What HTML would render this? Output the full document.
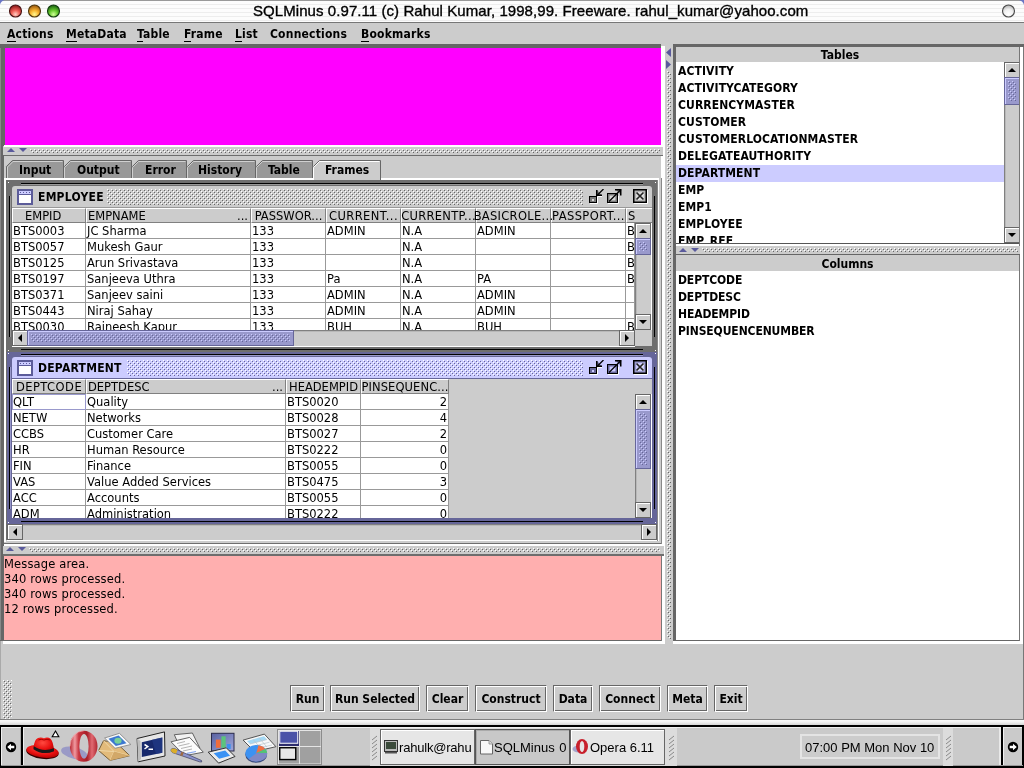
<!DOCTYPE html>
<html lang="en"><head><meta charset="utf-8"><title>SQLMinus 0.97.11</title>
<style>
html,body{margin:0;padding:0}
body{width:1024px;height:768px;overflow:hidden;position:relative;background:#ccc;font-family:"DejaVu Sans","Liberation Sans",sans-serif;color:#000}
div,.a,.t{position:absolute}
.t{white-space:nowrap;display:block}
.r,.b,.m{margin-top:1px}
.r{font:400 11.5px/16px "DejaVu Sans","Liberation Sans",sans-serif}
.b{font:700 12px/16px "DejaVu Sans Condensed","DejaVu Sans","Liberation Sans",sans-serif}
.m{font:400 11.5px/15px "DejaVu Sans","Liberation Sans",sans-serif;letter-spacing:.15px}
.h{font:400 13px/16px "Liberation Sans",sans-serif}
.ttl{font:400 15px/20px "Liberation Sans",sans-serif;letter-spacing:.07px;-webkit-text-stroke:.35px #000}
u{text-decoration:none;border-bottom:1px solid #000;padding-bottom:0}
.cell{overflow:hidden}
</style></head><body><div id="root" style="left:0;top:0;width:1024px;height:768px;will-change:transform">
<svg width="0" height="0" style="position:absolute"><defs>
<pattern id="b1" width="4" height="4" patternUnits="userSpaceOnUse"><rect width="4" height="4" fill="#ccc"/><rect x="0" y="0" width="1" height="1" fill="#fff"/><rect x="1" y="1" width="1" height="1" fill="#666"/><rect x="2" y="2" width="1" height="1" fill="#fff"/><rect x="3" y="3" width="1" height="1" fill="#666"/></pattern>
<pattern id="b2" width="4" height="4" patternUnits="userSpaceOnUse"><rect width="4" height="4" fill="#9999cc"/><rect x="0" y="0" width="1" height="1" fill="#ccccff"/><rect x="1" y="1" width="1" height="1" fill="#666699"/><rect x="2" y="2" width="1" height="1" fill="#ccccff"/><rect x="3" y="3" width="1" height="1" fill="#666699"/></pattern>
<pattern id="b3" width="4" height="4" patternUnits="userSpaceOnUse"><rect width="4" height="4" fill="#ccccff"/><rect x="0" y="0" width="1" height="1" fill="#fff"/><rect x="1" y="1" width="1" height="1" fill="#666699"/><rect x="2" y="2" width="1" height="1" fill="#fff"/><rect x="3" y="3" width="1" height="1" fill="#666699"/></pattern>
<radialGradient id="gr" cx=".5" cy=".78" r=".75"><stop offset="0" stop-color="#ffd0c4"/><stop offset=".45" stop-color="#f06058"/><stop offset="1" stop-color="#8a1818"/></radialGradient>
<radialGradient id="gy" cx=".5" cy=".78" r=".75"><stop offset="0" stop-color="#fff890"/><stop offset=".45" stop-color="#f8b430"/><stop offset="1" stop-color="#9a5810"/></radialGradient>
<radialGradient id="gg" cx=".5" cy=".78" r=".75"><stop offset="0" stop-color="#d0ff98"/><stop offset=".45" stop-color="#68cc30"/><stop offset="1" stop-color="#1a6410"/></radialGradient>
<radialGradient id="gw" cx=".5" cy=".75" r=".75"><stop offset="0" stop-color="#fff"/><stop offset=".5" stop-color="#f0f0f0"/><stop offset="1" stop-color="#b0b0b0"/></radialGradient>
</defs></svg>

<div style="left:0px;top:0px;width:1024px;height:23px;background:repeating-linear-gradient(to bottom,#fcfcfc 0,#fcfcfc 2.5px,#ededed 2.9px,#ededed 3.7px,#fcfcfc 4px);border-bottom:1px solid #777;box-sizing:border-box;border-top:1px solid #999;"></div>
<svg class="a" style="left:0;top:0" width="1024" height="8"><path d="M0,0 H4.500 Q1,1 0,4.500 Z" fill="#6a76c4"/><path d="M1024,0 H1019 Q1023,1 1024,5 Z" fill="#6a76c4"/></svg>
<svg class="a" style="left:0;top:0" width="1024" height="23"><circle cx="15.5" cy="11" r="6" fill="url(#gr)" stroke="#481414" stroke-width="1.100"/><circle cx="34.5" cy="11" r="6" fill="url(#gy)" stroke="#50380c" stroke-width="1.100"/><circle cx="53.5" cy="11" r="6" fill="url(#gg)" stroke="#123c10" stroke-width="1.100"/><circle cx="1008.5" cy="11" r="6" fill="url(#gw)" stroke="#4a4a4a" stroke-width="1.100"/></svg>
<span class="t ttl" style="left:253px;top:1px;">SQLMinus 0.97.11 (c) Rahul Kumar, 1998,99. Freeware. rahul_kumar@yahoo.com</span>
<div style="left:0px;top:23px;width:1024px;height:21px;background:#ccc;"></div>
<span class="t b" style="left:7px;top:25px;letter-spacing:.2px;"><u>A</u>ctions</span>
<span class="t b" style="left:66px;top:25px;letter-spacing:.2px;"><u>M</u>etaData</span>
<span class="t b" style="left:137px;top:25px;letter-spacing:.2px;"><u>T</u>able</span>
<span class="t b" style="left:184px;top:25px;letter-spacing:.2px;"><u>F</u>rame</span>
<span class="t b" style="left:235px;top:25px;letter-spacing:.2px;"><u>L</u>ist</span>
<span class="t b" style="left:270px;top:25px;letter-spacing:.2px;">Connections</span>
<span class="t b" style="left:361px;top:25px;letter-spacing:.2px;"><u>B</u>ookmarks</span>
<div style="left:0px;top:44px;width:4px;height:597px;background:#666;"></div>
<div style="left:0px;top:44px;width:1px;height:597px;background:#888;"></div>
<div style="left:1023px;top:44px;width:1px;height:680px;background:#777;"></div>
<div style="left:0px;top:641px;width:1px;height:80px;background:#aaa;"></div>
<div style="left:0px;top:44px;width:661px;height:4px;background:#666;"></div>
<div style="left:4px;top:48px;width:1px;height:97px;background:#666;"></div>
<div style="left:5px;top:48px;width:656px;height:97px;background:#f0f;"></div>
<div style="left:661px;top:46px;width:4px;height:595px;background:#fff;"></div>
<div style="left:665px;top:44px;width:8px;height:597px;background:#ccc;"></div>
<svg class="a" style="left:667px;top:71px" width="4" height="568"><rect width="4" height="568" fill="url(#b1)"/></svg>
<svg class="a" style="left:666px;top:48px" width="5" height="9"><polygon points="5,0 0,4.5 5,9" fill="#5a5a9c"/></svg>
<svg class="a" style="left:666px;top:60px" width="5" height="9"><polygon points="0,0 5,4.5 0,9" fill="#5a5a9c"/></svg>
<div style="left:661px;top:44px;width:12px;height:2px;background:#ccc;"></div>
<div style="left:3px;top:146px;width:660px;height:9px;background:#ccc;"></div>
<div style="left:4px;top:145px;width:659px;height:2px;background:#fff;"></div>
<svg class="a" style="left:7px;top:148px" width="8" height="4"><polygon points="0,4 4.0,0 8,4" fill="#5a5a9c"/></svg>
<svg class="a" style="left:19px;top:148px" width="8" height="4"><polygon points="0,0 8,0 4.0,4" fill="#5a5a9c"/></svg>
<svg class="a" style="left:30px;top:149px" width="630" height="4"><rect width="630" height="4" fill="url(#b1)"/></svg>
<div style="left:4px;top:155px;width:659px;height:1px;background:#6e6e6e;"></div>
<div style="left:4px;top:156px;width:657px;height:388px;background:#ccc;"></div>
<svg class="a" style="left:0;top:158px" width="400" height="24"><polygon points="6,20 6,8.5 12,2.5 64,2.5 64,20" fill="#999"/><polyline points="6.5,20 6.5,8.5 12.5,2.5 63.5,2.5 63.5,20" fill="none" stroke="#666" stroke-width="1"/><polyline points="7.5,20 7.5,9 13,3.5 62.5,3.5" fill="none" stroke="#d0d0d0" stroke-width="1"/><polygon points="64,20 64,8.5 70,2.5 132,2.5 132,20" fill="#999"/><polyline points="64.5,8.5 70.5,2.5 131.5,2.5 131.5,20" fill="none" stroke="#666" stroke-width="1"/><polyline points="64.5,20 64.5,9.5 70.5,3.5 130.5,3.5" fill="none" stroke="#d0d0d0" stroke-width="1"/><polygon points="132,20 132,8.5 138,2.5 187,2.5 187,20" fill="#999"/><polyline points="132.5,8.5 138.5,2.5 186.5,2.5 186.5,20" fill="none" stroke="#666" stroke-width="1"/><polyline points="132.5,20 132.5,9.5 138.5,3.5 185.5,3.5" fill="none" stroke="#d0d0d0" stroke-width="1"/><polygon points="187,20 187,8.5 193,2.5 256,2.5 256,20" fill="#999"/><polyline points="187.5,8.5 193.5,2.5 255.5,2.5 255.5,20" fill="none" stroke="#666" stroke-width="1"/><polyline points="187.5,20 187.5,9.5 193.5,3.5 254.5,3.5" fill="none" stroke="#d0d0d0" stroke-width="1"/><polygon points="256,20 256,8.5 262,2.5 313,2.5 313,20" fill="#999"/><polyline points="256.5,8.5 262.5,2.5 312.5,2.5 312.5,20" fill="none" stroke="#666" stroke-width="1"/><polyline points="256.5,20 256.5,9.5 262.5,3.5 311.5,3.5" fill="none" stroke="#d0d0d0" stroke-width="1"/><polygon points="313,22 313,8.5 319,2.5 381,2.5 381,22" fill="#ccc"/><polyline points="313.5,8.5 319.5,2.5 380.5,2.5 380.5,22" fill="none" stroke="#666" stroke-width="1"/><polyline points="313.5,22 313.5,9.5 319.5,3.5 379.5,3.5" fill="none" stroke="#fff" stroke-width="1"/></svg>
<span class="t b" style="left:19px;top:161px;">Input</span>
<span class="t b" style="left:77px;top:161px;">Output</span>
<span class="t b" style="left:145px;top:161px;">Error</span>
<span class="t b" style="left:198px;top:161px;">History</span>
<span class="t b" style="left:268px;top:161px;">Table</span>
<span class="t b" style="left:325px;top:161px;">Frames</span>
<div style="left:4px;top:178px;width:309px;height:2px;background:#fff;"></div>
<div style="left:381px;top:178px;width:278px;height:2px;background:#fff;"></div>
<div style="left:4px;top:178px;width:2px;height:364px;background:#fff;"></div>
<div style="left:6px;top:180px;width:1px;height:360px;background:#6e6e6e;"></div>
<div style="left:6px;top:180px;width:651px;height:1px;background:#6e6e6e;"></div>
<div style="left:4px;top:543px;width:658px;height:1px;background:#6e6e6e;"></div>
<div style="left:657px;top:180px;width:1px;height:361px;background:#888;"></div>
<div style="left:658px;top:179px;width:1px;height:362px;background:#fff;"></div>
<div style="left:661px;top:178px;width:1px;height:366px;background:#888;"></div>
<div style="left:6px;top:541px;width:655px;height:2px;background:#ccc;"></div>
<div style="left:7px;top:181px;width:650px;height:171px;background:#6e6e6e;"></div>
<div style="left:21px;top:183px;width:622px;height:1px;background:#000;"></div>
<div style="left:21px;top:184px;width:622px;height:1px;background:#999;"></div>
<div style="left:21px;top:349px;width:622px;height:1px;background:#000;"></div>
<div style="left:9px;top:196px;width:1px;height:141px;background:#000;"></div>
<div style="left:10px;top:196px;width:1px;height:141px;background:#999;"></div>
<div style="left:654px;top:196px;width:1px;height:141px;background:#000;"></div>
<div style="left:8px;top:182px;width:1px;height:1px;background:#fff;"></div>
<div style="left:655px;top:182px;width:1px;height:1px;background:#fff;"></div>
<div style="left:8px;top:350px;width:1px;height:1px;background:#fff;"></div>
<div style="left:655px;top:350px;width:1px;height:1px;background:#fff;"></div>
<div style="left:12px;top:186px;width:640px;height:22px;background:#ccc;border-radius:3px 3px 0 0;"></div>
<div style="left:12px;top:207px;width:640px;height:1px;background:#999;"></div>
<svg class="a" style="left:17px;top:189px" width="16" height="16"><rect x="1" y="1" width="14" height="14" fill="#fff" stroke="#5c5c99" stroke-width="2"/><rect x="2" y="2" width="12" height="3" fill="#ccccff"/><rect x="2" y="5" width="12" height="1" fill="#5c5c99"/><rect x="3" y="3" width="1" height="1" fill="#5c5c99"/><rect x="6" y="3" width="1" height="1" fill="#5c5c99"/><rect x="9" y="3" width="1" height="1" fill="#5c5c99"/><rect x="12" y="3" width="1" height="1" fill="#5c5c99"/></svg>
<span class="t b" style="left:38px;top:188px;letter-spacing:.25px;">EMPLOYEE</span>
<svg class="a" style="left:107px;top:189px" width="476" height="16"><rect width="476" height="16" fill="url(#b1)"/></svg>
<svg class="a" style="left:589px;top:189px" width="60" height="16"><rect x=".5" y="7.500" width="7" height="6" fill="#7a7a7a" stroke="#000" stroke-width="1"/><rect x="3" y="10" width="2" height="2" fill="#d8d8d8"/><path d="M1,14.500 H8.500 V8" stroke="#fff" stroke-width="1" fill="none"/><path d="M8,1 V6.500 H13 Z" fill="#7a7a7a"/><path d="M14.500,0 L8.500,6" stroke="#000" stroke-width="1.300" fill="none"/><path d="M7.750,1 V6.250 H13" stroke="#000" stroke-width="1.500" fill="none"/><path d="M8.500,7.500 H13" stroke="#fff" stroke-width="1" fill="none"/><rect x="18.500" y="4.500" width="10" height="9" fill="#7a7a7a" stroke="#000" stroke-width="1"/><rect x="20.500" y="6.500" width="6" height="5" fill="#d8d8d8"/><path d="M20,12.500 L27,5.500" stroke="#000" stroke-width="1.300" fill="none"/><path d="M19,14.500 H29.500 V7" stroke="#fff" stroke-width="1" fill="none"/><path d="M27,1 H31.500 V5.500 Z" fill="#7a7a7a"/><path d="M26.500,6 L32,.5" stroke="#000" stroke-width="1.300" fill="none"/><path d="M26,.75 H31.750 V6.500" stroke="#000" stroke-width="1.500" fill="none"/><rect x="44.750" y=".75" width="12.500" height="12.500" fill="#b4b4b4" stroke="#000" stroke-width="1.500"/><rect x="47" y="3" width="8" height="8" fill="#d8d8d8"/><path d="M45,14.500 H58.500 V1" stroke="#fff" stroke-width="1" fill="none"/><path d="M48.500,4 L55,10.500 M55,4 L48.500,10.500" stroke="#fff" stroke-width="1.200" fill="none"/><path d="M47.500,3.500 L54.500,10.500 M54.500,3.500 L47.500,10.500" stroke="#222" stroke-width="1.700" fill="none"/></svg>
<div style="left:12px;top:208px;width:640px;height:138px;background:#ccc;"></div>
<div class="cell" style="left:12px;top:208px;width:74px;height:15px;background:#ccc;box-sizing:border-box;border:1px solid #fff;border-right-color:#808080;border-bottom-color:#808080;"></div>
<div class="cell" style="left:86px;top:208px;width:165px;height:15px;background:#ccc;box-sizing:border-box;border:1px solid #fff;border-right-color:#808080;border-bottom-color:#808080;"></div>
<div class="cell" style="left:251px;top:208px;width:75px;height:15px;background:#ccc;box-sizing:border-box;border:1px solid #fff;border-right-color:#808080;border-bottom-color:#808080;"></div>
<div class="cell" style="left:326px;top:208px;width:75px;height:15px;background:#ccc;box-sizing:border-box;border:1px solid #fff;border-right-color:#808080;border-bottom-color:#808080;"></div>
<div class="cell" style="left:401px;top:208px;width:75px;height:15px;background:#ccc;box-sizing:border-box;border:1px solid #fff;border-right-color:#808080;border-bottom-color:#808080;"></div>
<div class="cell" style="left:476px;top:208px;width:75px;height:15px;background:#ccc;box-sizing:border-box;border:1px solid #fff;border-right-color:#808080;border-bottom-color:#808080;"></div>
<div class="cell" style="left:551px;top:208px;width:75px;height:15px;background:#ccc;box-sizing:border-box;border:1px solid #fff;border-right-color:#808080;border-bottom-color:#808080;"></div>
<div class="cell" style="left:626px;top:208px;width:26px;height:15px;background:#ccc;box-sizing:border-box;border:1px solid #fff;border-right:0;border-bottom-color:#808080;"></div>
<span class="t r" style="left:25px;top:207px;">EMPID</span>
<span class="t r" style="left:88px;top:207px;">EMPNAME</span>
<span class="t r" style="left:86px;top:207px;width:162px;text-align:right;">...</span>
<span class="t r" style="left:252px;top:207px;letter-spacing:0px;width:73px;display:flex;justify-content:center;">PASSWOR...</span>
<span class="t r" style="left:327px;top:207px;letter-spacing:0.4px;width:73px;display:flex;justify-content:center;">CURRENT...</span>
<span class="t r" style="left:402px;top:207px;letter-spacing:0.3px;width:73px;display:flex;justify-content:center;">CURRENTP...</span>
<span class="t r" style="left:477px;top:207px;letter-spacing:0.3px;width:73px;display:flex;justify-content:center;">BASICROLE...</span>
<span class="t r" style="left:552px;top:207px;letter-spacing:0.4px;width:73px;display:flex;justify-content:center;">PASSPORT...</span>
<span class="t r" style="left:628px;top:207px;width:7px;overflow:hidden;letter-spacing:-1px;">SI</span>
<div style="left:12px;top:223px;width:623px;height:107px;overflow:hidden;"><div style="left:0;top:0;width:623px;height:112px;background:#fff"></div><div style="left:0;top:15px;width:623px;height:1px;background:#999"></div><div style="left:0;top:31px;width:623px;height:1px;background:#999"></div><div style="left:0;top:47px;width:623px;height:1px;background:#999"></div><div style="left:0;top:63px;width:623px;height:1px;background:#999"></div><div style="left:0;top:79px;width:623px;height:1px;background:#999"></div><div style="left:0;top:95px;width:623px;height:1px;background:#999"></div><div style="left:0;top:111px;width:623px;height:1px;background:#999"></div><div style="left:73px;top:0;width:1px;height:112px;background:#999"></div><div style="left:238px;top:0;width:1px;height:112px;background:#999"></div><div style="left:313px;top:0;width:1px;height:112px;background:#999"></div><div style="left:388px;top:0;width:1px;height:112px;background:#999"></div><div style="left:463px;top:0;width:1px;height:112px;background:#999"></div><div style="left:538px;top:0;width:1px;height:112px;background:#999"></div><div style="left:613px;top:0;width:1px;height:112px;background:#999"></div><div style="left:622px;top:0;width:1px;height:112px;background:#999"></div><span class="t r" style="left:1px;top:-1px">BTS0003</span><span class="t r" style="left:75px;top:-1px">JC Sharma</span><span class="t r" style="left:240px;top:-1px">133</span><span class="t r" style="left:315px;top:-1px">ADMIN</span><span class="t r" style="left:390px;top:-1px">N.A</span><span class="t r" style="left:465px;top:-1px">ADMIN</span><span class="t r" style="left:615px;top:-1px">B</span><span class="t r" style="left:1px;top:15px">BTS0057</span><span class="t r" style="left:75px;top:15px">Mukesh Gaur</span><span class="t r" style="left:240px;top:15px">133</span><span class="t r" style="left:390px;top:15px">N.A</span><span class="t r" style="left:615px;top:15px">B</span><span class="t r" style="left:1px;top:31px">BTS0125</span><span class="t r" style="left:75px;top:31px">Arun Srivastava</span><span class="t r" style="left:240px;top:31px">133</span><span class="t r" style="left:390px;top:31px">N.A</span><span class="t r" style="left:615px;top:31px">B</span><span class="t r" style="left:1px;top:47px">BTS0197</span><span class="t r" style="left:75px;top:47px">Sanjeeva Uthra</span><span class="t r" style="left:240px;top:47px">133</span><span class="t r" style="left:315px;top:47px">Pa</span><span class="t r" style="left:390px;top:47px">N.A</span><span class="t r" style="left:465px;top:47px">PA</span><span class="t r" style="left:615px;top:47px">B</span><span class="t r" style="left:1px;top:63px">BTS0371</span><span class="t r" style="left:75px;top:63px">Sanjeev saini</span><span class="t r" style="left:240px;top:63px">133</span><span class="t r" style="left:315px;top:63px">ADMIN</span><span class="t r" style="left:390px;top:63px">N.A</span><span class="t r" style="left:465px;top:63px">ADMIN</span><span class="t r" style="left:1px;top:79px">BTS0443</span><span class="t r" style="left:75px;top:79px">Niraj Sahay</span><span class="t r" style="left:240px;top:79px">133</span><span class="t r" style="left:315px;top:79px">ADMIN</span><span class="t r" style="left:390px;top:79px">N.A</span><span class="t r" style="left:465px;top:79px">ADMIN</span><span class="t r" style="left:1px;top:95px">BTS0030</span><span class="t r" style="left:75px;top:95px">Rajneesh Kapur</span><span class="t r" style="left:240px;top:95px">133</span><span class="t r" style="left:315px;top:95px">BUH</span><span class="t r" style="left:390px;top:95px">N.A</span><span class="t r" style="left:465px;top:95px">BUH</span><span class="t r" style="left:615px;top:95px">B</span></div>
<div style="left:635px;top:223px;width:17px;height:107px;background:#ccc;box-sizing:border-box;border:1px solid #808080;border-right-color:#fff;border-bottom-color:#fff;box-shadow:inset 1px 1px 0 #b8b8b8;"></div>
<div style="left:635px;top:223px;width:16px;height:16px;background:#ccc;box-sizing:border-box;border:1px solid #666;box-shadow:inset 1px 1px 0 #fff;"></div>
<svg class="a" style="left:639px;top:229px" width="8" height="4"><polygon points="0,4 4.0,0 8,4" fill="#000"/></svg>
<div style="left:635px;top:238px;width:16px;height:17px;background:#9999cc;box-sizing:border-box;border:1px solid #666699;box-shadow:inset 1px 1px 0 #ccccff;"></div>
<svg class="a" style="left:639px;top:242px" width="8" height="9"><rect width="8" height="9" fill="url(#b2)"/></svg>
<div style="left:635px;top:314px;width:16px;height:16px;background:#ccc;box-sizing:border-box;border:1px solid #666;box-shadow:inset 1px 1px 0 #fff;"></div>
<svg class="a" style="left:639px;top:320px" width="8" height="4"><polygon points="0,0 8,0 4.0,4" fill="#000"/></svg>
<div style="left:651px;top:223px;width:1px;height:107px;background:#fff;"></div>
<div style="left:12px;top:330px;width:623px;height:17px;background:#ccc;box-sizing:border-box;border:1px solid #808080;border-right-color:#fff;border-bottom-color:#fff;box-shadow:inset 1px 1px 0 #b8b8b8;"></div>
<div style="left:12px;top:330px;width:16px;height:16px;background:#ccc;box-sizing:border-box;border:1px solid #666;box-shadow:inset 1px 1px 0 #fff;"></div>
<svg class="a" style="left:18px;top:334px" width="4" height="8"><polygon points="4,0 0,4.0 4,8" fill="#000"/></svg>
<div style="left:27px;top:330px;width:267px;height:16px;background:#9999cc;box-sizing:border-box;border:1px solid #666699;box-shadow:inset 1px 1px 0 #ccccff;"></div>
<svg class="a" style="left:31px;top:334px" width="259" height="8"><rect width="259" height="8" fill="url(#b2)"/></svg>
<div style="left:619px;top:330px;width:16px;height:16px;background:#ccc;box-sizing:border-box;border:1px solid #666;box-shadow:inset 1px 1px 0 #fff;"></div>
<svg class="a" style="left:625px;top:334px" width="4" height="8"><polygon points="0,0 4,4.0 0,8" fill="#000"/></svg>
<div style="left:12px;top:346px;width:623px;height:1px;background:#fff;"></div>
<div style="left:7px;top:352px;width:650px;height:172px;background:#666699;"></div>
<div style="left:21px;top:354px;width:622px;height:1px;background:#000;"></div>
<div style="left:21px;top:355px;width:622px;height:1px;background:#9999cc;"></div>
<div style="left:21px;top:521px;width:622px;height:1px;background:#000;"></div>
<div style="left:9px;top:367px;width:1px;height:142px;background:#000;"></div>
<div style="left:10px;top:367px;width:1px;height:142px;background:#9999cc;"></div>
<div style="left:654px;top:367px;width:1px;height:142px;background:#000;"></div>
<div style="left:8px;top:353px;width:1px;height:1px;background:#fff;"></div>
<div style="left:655px;top:353px;width:1px;height:1px;background:#fff;"></div>
<div style="left:8px;top:522px;width:1px;height:1px;background:#fff;"></div>
<div style="left:655px;top:522px;width:1px;height:1px;background:#fff;"></div>
<div style="left:12px;top:357px;width:640px;height:22px;background:#ccccff;border-radius:3px 3px 0 0;"></div>
<div style="left:12px;top:378px;width:640px;height:1px;background:#666699;"></div>
<svg class="a" style="left:17px;top:360px" width="16" height="16"><rect x="1" y="1" width="14" height="14" fill="#fff" stroke="#5c5c99" stroke-width="2"/><rect x="2" y="2" width="12" height="3" fill="#ccccff"/><rect x="2" y="5" width="12" height="1" fill="#5c5c99"/><rect x="3" y="3" width="1" height="1" fill="#5c5c99"/><rect x="6" y="3" width="1" height="1" fill="#5c5c99"/><rect x="9" y="3" width="1" height="1" fill="#5c5c99"/><rect x="12" y="3" width="1" height="1" fill="#5c5c99"/></svg>
<span class="t b" style="left:38px;top:359px;letter-spacing:.25px;">DEPARTMENT</span>
<svg class="a" style="left:127px;top:360px" width="456" height="16"><rect width="456" height="16" fill="url(#b3)"/></svg>
<svg class="a" style="left:589px;top:360px" width="60" height="16"><rect x=".5" y="7.500" width="7" height="6" fill="#666699" stroke="#000" stroke-width="1"/><rect x="3" y="10" width="2" height="2" fill="#ccccff"/><path d="M1,14.500 H8.500 V8" stroke="#fff" stroke-width="1" fill="none"/><path d="M8,1 V6.500 H13 Z" fill="#666699"/><path d="M14.500,0 L8.500,6" stroke="#000" stroke-width="1.300" fill="none"/><path d="M7.750,1 V6.250 H13" stroke="#000" stroke-width="1.500" fill="none"/><path d="M8.500,7.500 H13" stroke="#fff" stroke-width="1" fill="none"/><rect x="18.500" y="4.500" width="10" height="9" fill="#666699" stroke="#000" stroke-width="1"/><rect x="20.500" y="6.500" width="6" height="5" fill="#ccccff"/><path d="M20,12.500 L27,5.500" stroke="#000" stroke-width="1.300" fill="none"/><path d="M19,14.500 H29.500 V7" stroke="#fff" stroke-width="1" fill="none"/><path d="M27,1 H31.500 V5.500 Z" fill="#666699"/><path d="M26.500,6 L32,.5" stroke="#000" stroke-width="1.300" fill="none"/><path d="M26,.75 H31.750 V6.500" stroke="#000" stroke-width="1.500" fill="none"/><rect x="44.750" y=".75" width="12.500" height="12.500" fill="#9999cc" stroke="#000" stroke-width="1.500"/><rect x="47" y="3" width="8" height="8" fill="#ccccff"/><path d="M45,14.500 H58.500 V1" stroke="#fff" stroke-width="1" fill="none"/><path d="M48.500,4 L55,10.500 M55,4 L48.500,10.500" stroke="#fff" stroke-width="1.200" fill="none"/><path d="M47.500,3.500 L54.500,10.500 M54.500,3.500 L47.500,10.500" stroke="#222" stroke-width="1.700" fill="none"/></svg>
<div style="left:12px;top:379px;width:640px;height:139px;background:#ccc;"></div>
<div class="cell" style="left:12px;top:379px;width:74px;height:15px;background:#ccc;box-sizing:border-box;border:1px solid #fff;border-right-color:#808080;border-bottom-color:#808080;"></div>
<div class="cell" style="left:86px;top:379px;width:200px;height:15px;background:#ccc;box-sizing:border-box;border:1px solid #fff;border-right-color:#808080;border-bottom-color:#808080;"></div>
<div class="cell" style="left:286px;top:379px;width:75px;height:15px;background:#ccc;box-sizing:border-box;border:1px solid #fff;border-right-color:#808080;border-bottom-color:#808080;"></div>
<div class="cell" style="left:361px;top:379px;width:88px;height:15px;background:#ccc;box-sizing:border-box;border:1px solid #fff;border-right-color:#808080;border-bottom-color:#808080;"></div>
<span class="t r" style="left:13px;top:378px;letter-spacing:0.45px;width:72px;display:flex;justify-content:center;">DEPTCODE</span>
<span class="t r" style="left:88px;top:378px;">DEPTDESC</span>
<span class="t r" style="left:86px;top:378px;width:197px;text-align:right;">...</span>
<span class="t r" style="left:287px;top:378px;letter-spacing:0px;width:73px;display:flex;justify-content:center;">HEADEMPID</span>
<span class="t r" style="left:362px;top:378px;letter-spacing:0.1px;width:86px;display:flex;justify-content:center;">PINSEQUENC...</span>
<div style="left:12px;top:394px;width:437px;height:124px;overflow:hidden;"><div style="left:0;top:0;width:437px;height:128px;background:#fff"></div><div style="left:0;top:15px;width:437px;height:1px;background:#999"></div><div style="left:0;top:31px;width:437px;height:1px;background:#999"></div><div style="left:0;top:47px;width:437px;height:1px;background:#999"></div><div style="left:0;top:63px;width:437px;height:1px;background:#999"></div><div style="left:0;top:79px;width:437px;height:1px;background:#999"></div><div style="left:0;top:95px;width:437px;height:1px;background:#999"></div><div style="left:0;top:111px;width:437px;height:1px;background:#999"></div><div style="left:0;top:127px;width:437px;height:1px;background:#999"></div><div style="left:73px;top:0;width:1px;height:128px;background:#999"></div><div style="left:273px;top:0;width:1px;height:128px;background:#999"></div><div style="left:348px;top:0;width:1px;height:128px;background:#999"></div><div style="left:436px;top:0;width:1px;height:128px;background:#999"></div><span class="t r" style="left:1px;top:-1px">QLT</span><span class="t r" style="left:75px;top:-1px">Quality</span><span class="t r" style="left:275px;top:-1px">BTS0020</span><span class="t r" style="left:349px;top:-1px;width:86px;text-align:right">2</span><span class="t r" style="left:1px;top:15px">NETW</span><span class="t r" style="left:75px;top:15px">Networks</span><span class="t r" style="left:275px;top:15px">BTS0028</span><span class="t r" style="left:349px;top:15px;width:86px;text-align:right">4</span><span class="t r" style="left:1px;top:31px">CCBS</span><span class="t r" style="left:75px;top:31px">Customer Care</span><span class="t r" style="left:275px;top:31px">BTS0027</span><span class="t r" style="left:349px;top:31px;width:86px;text-align:right">2</span><span class="t r" style="left:1px;top:47px">HR</span><span class="t r" style="left:75px;top:47px">Human Resource</span><span class="t r" style="left:275px;top:47px">BTS0222</span><span class="t r" style="left:349px;top:47px;width:86px;text-align:right">0</span><span class="t r" style="left:1px;top:63px">FIN</span><span class="t r" style="left:75px;top:63px">Finance</span><span class="t r" style="left:275px;top:63px">BTS0055</span><span class="t r" style="left:349px;top:63px;width:86px;text-align:right">0</span><span class="t r" style="left:1px;top:79px">VAS</span><span class="t r" style="left:75px;top:79px">Value Added Services</span><span class="t r" style="left:275px;top:79px">BTS0475</span><span class="t r" style="left:349px;top:79px;width:86px;text-align:right">3</span><span class="t r" style="left:1px;top:95px">ACC</span><span class="t r" style="left:75px;top:95px">Accounts</span><span class="t r" style="left:275px;top:95px">BTS0055</span><span class="t r" style="left:349px;top:95px;width:86px;text-align:right">0</span><span class="t r" style="left:1px;top:111px">ADM</span><span class="t r" style="left:75px;top:111px">Administration</span><span class="t r" style="left:275px;top:111px">BTS0222</span><span class="t r" style="left:349px;top:111px;width:86px;text-align:right">0</span></div>
<div style="left:12px;top:394px;width:74px;height:16px;box-sizing:border-box;border:1px solid #9999cc;"></div>
<div style="left:635px;top:394px;width:17px;height:124px;background:#ccc;box-sizing:border-box;border:1px solid #808080;border-right-color:#fff;border-bottom-color:#fff;box-shadow:inset 1px 1px 0 #b8b8b8;"></div>
<div style="left:635px;top:394px;width:16px;height:16px;background:#ccc;box-sizing:border-box;border:1px solid #666;box-shadow:inset 1px 1px 0 #fff;"></div>
<svg class="a" style="left:639px;top:400px" width="8" height="4"><polygon points="0,4 4.0,0 8,4" fill="#000"/></svg>
<div style="left:635px;top:409px;width:16px;height:60px;background:#9999cc;box-sizing:border-box;border:1px solid #666699;box-shadow:inset 1px 1px 0 #ccccff;"></div>
<svg class="a" style="left:639px;top:413px" width="8" height="52"><rect width="8" height="52" fill="url(#b2)"/></svg>
<div style="left:635px;top:502px;width:16px;height:16px;background:#ccc;box-sizing:border-box;border:1px solid #666;box-shadow:inset 1px 1px 0 #fff;"></div>
<svg class="a" style="left:639px;top:508px" width="8" height="4"><polygon points="0,0 8,0 4.0,4" fill="#000"/></svg>
<div style="left:651px;top:394px;width:1px;height:124px;background:#fff;"></div>
<div style="left:7px;top:524px;width:650px;height:17px;background:#ccc;box-sizing:border-box;border:1px solid #808080;border-right-color:#fff;border-bottom-color:#fff;box-shadow:inset 1px 1px 0 #b8b8b8;"></div>
<div style="left:7px;top:524px;width:16px;height:16px;background:#ccc;box-sizing:border-box;border:1px solid #666;box-shadow:inset 1px 1px 0 #fff;"></div>
<svg class="a" style="left:13px;top:528px" width="4" height="8"><polygon points="4,0 0,4.0 4,8" fill="#000"/></svg>
<div style="left:641px;top:524px;width:16px;height:16px;background:#ccc;box-sizing:border-box;border:1px solid #666;box-shadow:inset 1px 1px 0 #fff;"></div>
<svg class="a" style="left:647px;top:528px" width="4" height="8"><polygon points="0,0 4,4.0 0,8" fill="#000"/></svg>
<div style="left:7px;top:540px;width:650px;height:1px;background:#fff;"></div>
<div style="left:3px;top:546px;width:661px;height:8px;background:#ccc;"></div>
<div style="left:4px;top:544px;width:660px;height:2px;background:#fff;"></div>
<svg class="a" style="left:6px;top:547px" width="8" height="4"><polygon points="0,4 4.0,0 8,4" fill="#5a5a9c"/></svg>
<svg class="a" style="left:18px;top:547px" width="8" height="4"><polygon points="0,0 8,0 4.0,4" fill="#5a5a9c"/></svg>
<svg class="a" style="left:29px;top:548px" width="631" height="4"><rect width="631" height="4" fill="url(#b1)"/></svg>
<div style="left:3px;top:554px;width:661px;height:2px;background:#6e6e6e;"></div>
<div style="left:4px;top:556px;width:657px;height:84px;background:#ffafaf;"></div>
<span class="t m" style="left:4px;top:556px;">Message area.</span>
<span class="t m" style="left:4px;top:571px;">340 rows processed.</span>
<span class="t m" style="left:4px;top:586px;">340 rows processed.</span>
<span class="t m" style="left:4px;top:601px;">12 rows processed.</span>
<div style="left:0px;top:640px;width:662px;height:1px;background:#666;"></div>
<div style="left:676px;top:640px;width:344px;height:1px;background:#666;"></div>
<div style="left:661px;top:556px;width:1px;height:85px;background:#777;"></div>
<div style="left:3px;top:641px;width:662px;height:3px;background:#fff;"></div>
<div style="left:673px;top:641px;width:350px;height:3px;background:#fff;"></div>
<div style="left:665px;top:640px;width:8px;height:4px;background:#ccc;"></div>
<div style="left:673px;top:44px;width:351px;height:3px;background:#666;"></div>
<div style="left:673px;top:44px;width:3px;height:597px;background:#666;"></div>
<div style="left:676px;top:47px;width:343px;height:15px;background:#ccc;"></div>
<span class="t b" style="left:676px;top:46px;width:328px;text-align:center;">Tables</span>
<div style="left:676px;top:62px;width:328px;height:181px;background:#fff;"></div>
<div style="left:676px;top:62px;width:328px;height:181px;overflow:hidden;"><span class="t b" style="left:0;top:0px;width:328px;height:17px;line-height:17px;text-indent:2px;letter-spacing:.1px">ACTIVITY</span><span class="t b" style="left:0;top:17px;width:328px;height:17px;line-height:17px;text-indent:2px;letter-spacing:.1px">ACTIVITYCATEGORY</span><span class="t b" style="left:0;top:34px;width:328px;height:17px;line-height:17px;text-indent:2px;letter-spacing:.1px">CURRENCYMASTER</span><span class="t b" style="left:0;top:51px;width:328px;height:17px;line-height:17px;text-indent:2px;letter-spacing:.1px">CUSTOMER</span><span class="t b" style="left:0;top:68px;width:328px;height:17px;line-height:17px;text-indent:2px;letter-spacing:.1px">CUSTOMERLOCATIONMASTER</span><span class="t b" style="left:0;top:85px;width:328px;height:17px;line-height:17px;text-indent:2px;letter-spacing:.1px">DELEGATEAUTHORITY</span><span class="t b" style="left:0;top:102px;width:328px;height:17px;line-height:17px;background:#ccccff;text-indent:2px;letter-spacing:.1px">DEPARTMENT</span><span class="t b" style="left:0;top:119px;width:328px;height:17px;line-height:17px;text-indent:2px;letter-spacing:.1px">EMP</span><span class="t b" style="left:0;top:136px;width:328px;height:17px;line-height:17px;text-indent:2px;letter-spacing:.1px">EMP1</span><span class="t b" style="left:0;top:153px;width:328px;height:17px;line-height:17px;text-indent:2px;letter-spacing:.1px">EMPLOYEE</span><span class="t b" style="left:0;top:170px;width:328px;height:17px;line-height:17px;text-indent:2px;letter-spacing:.1px">EMP_REF</span></div>
<div style="left:1004px;top:62px;width:17px;height:181px;background:#ccc;box-sizing:border-box;border:1px solid #808080;border-right-color:#fff;border-bottom-color:#fff;box-shadow:inset 1px 1px 0 #b8b8b8;"></div>
<div style="left:1004px;top:62px;width:16px;height:16px;background:#ccc;box-sizing:border-box;border:1px solid #666;box-shadow:inset 1px 1px 0 #fff;"></div>
<svg class="a" style="left:1008px;top:68px" width="8" height="4"><polygon points="0,4 4.0,0 8,4" fill="#000"/></svg>
<div style="left:1004px;top:77px;width:16px;height:28px;background:#9999cc;box-sizing:border-box;border:1px solid #666699;box-shadow:inset 1px 1px 0 #ccccff;"></div>
<svg class="a" style="left:1008px;top:81px" width="8" height="20"><rect width="8" height="20" fill="url(#b2)"/></svg>
<div style="left:1004px;top:227px;width:16px;height:16px;background:#ccc;box-sizing:border-box;border:1px solid #666;box-shadow:inset 1px 1px 0 #fff;"></div>
<svg class="a" style="left:1008px;top:233px" width="8" height="4"><polygon points="0,0 8,0 4.0,4" fill="#000"/></svg>
<div style="left:1020px;top:62px;width:1px;height:181px;background:#fff;"></div>
<div style="left:676px;top:243px;width:344px;height:1px;background:#555;"></div>
<div style="left:676px;top:244px;width:347px;height:2px;background:#fff;"></div>
<div style="left:1020px;top:47px;width:3px;height:597px;background:#fff;"></div>
<div style="left:1019px;top:47px;width:1px;height:594px;background:#777;"></div>
<div style="left:676px;top:246px;width:344px;height:8px;background:#ccc;"></div>
<svg class="a" style="left:679px;top:248px" width="8" height="4"><polygon points="0,4 4.0,0 8,4" fill="#5a5a9c"/></svg>
<svg class="a" style="left:691px;top:248px" width="8" height="4"><polygon points="0,0 8,0 4.0,4" fill="#5a5a9c"/></svg>
<svg class="a" style="left:702px;top:248px" width="316" height="4"><rect width="316" height="4" fill="url(#b1)"/></svg>
<div style="left:676px;top:254px;width:344px;height:1px;background:#666;"></div>
<div style="left:676px;top:255px;width:343px;height:16px;background:#ccc;"></div>
<span class="t b" style="left:676px;top:255px;width:343px;text-align:center;">Columns</span>
<div style="left:676px;top:271px;width:343px;height:369px;background:#fff;"></div>
<span class="t b" style="left:678px;top:271px;line-height:17px;letter-spacing:-.1px;">DEPTCODE</span>
<span class="t b" style="left:678px;top:288px;line-height:17px;letter-spacing:-.1px;">DEPTDESC</span>
<span class="t b" style="left:678px;top:305px;line-height:17px;letter-spacing:-.1px;">HEADEMPID</span>
<span class="t b" style="left:678px;top:322px;line-height:17px;letter-spacing:-.1px;">PINSEQUENCENUMBER</span>
<svg class="a" style="left:3px;top:680px" width="9" height="40"><rect width="9" height="40" fill="url(#b1)"/></svg>
<div style="left:290px;top:685px;width:35px;height:27px;background:#ccc;box-sizing:border-box;border:1px solid #666;border-right-color:#fff;border-bottom-color:#fff;box-shadow:inset 1px 1px 0 #fff, inset -1px -1px 0 #666;"><span class="t b" style="left:0;top:4px;width:33px;text-align:center">Run</span></div>
<div style="left:330px;top:685px;width:90px;height:27px;background:#ccc;box-sizing:border-box;border:1px solid #666;border-right-color:#fff;border-bottom-color:#fff;box-shadow:inset 1px 1px 0 #fff, inset -1px -1px 0 #666;"><span class="t b" style="left:0;top:4px;width:88px;text-align:center">Run Selected</span></div>
<div style="left:426px;top:685px;width:43px;height:27px;background:#ccc;box-sizing:border-box;border:1px solid #666;border-right-color:#fff;border-bottom-color:#fff;box-shadow:inset 1px 1px 0 #fff, inset -1px -1px 0 #666;"><span class="t b" style="left:0;top:4px;width:41px;text-align:center">Clear</span></div>
<div style="left:475px;top:685px;width:72px;height:27px;background:#ccc;box-sizing:border-box;border:1px solid #666;border-right-color:#fff;border-bottom-color:#fff;box-shadow:inset 1px 1px 0 #fff, inset -1px -1px 0 #666;"><span class="t b" style="left:0;top:4px;width:70px;text-align:center">Construct</span></div>
<div style="left:553px;top:685px;width:40px;height:27px;background:#ccc;box-sizing:border-box;border:1px solid #666;border-right-color:#fff;border-bottom-color:#fff;box-shadow:inset 1px 1px 0 #fff, inset -1px -1px 0 #666;"><span class="t b" style="left:0;top:4px;width:38px;text-align:center">Data</span></div>
<div style="left:599px;top:685px;width:62px;height:27px;background:#ccc;box-sizing:border-box;border:1px solid #666;border-right-color:#fff;border-bottom-color:#fff;box-shadow:inset 1px 1px 0 #fff, inset -1px -1px 0 #666;"><span class="t b" style="left:0;top:4px;width:60px;text-align:center">Connect</span></div>
<div style="left:667px;top:685px;width:41px;height:27px;background:#ccc;box-sizing:border-box;border:1px solid #666;border-right-color:#fff;border-bottom-color:#fff;box-shadow:inset 1px 1px 0 #fff, inset -1px -1px 0 #666;"><span class="t b" style="left:0;top:4px;width:39px;text-align:center">Meta</span></div>
<div style="left:714px;top:685px;width:34px;height:27px;background:#ccc;box-sizing:border-box;border:1px solid #666;border-right-color:#fff;border-bottom-color:#fff;box-shadow:inset 1px 1px 0 #fff, inset -1px -1px 0 #666;"><span class="t b" style="left:0;top:4px;width:32px;text-align:center">Exit</span></div>
<div style="left:0px;top:719px;width:1024px;height:1px;background:#808080;"></div>
<div style="left:0px;top:720px;width:1024px;height:5px;background:linear-gradient(to bottom,#fafafa 0,#f2f2f2 40%,#d6d6d6 100%);"></div>
<div style="left:0px;top:725px;width:1024px;height:2px;background:#000;"></div>
<div style="left:0px;top:727px;width:1024px;height:39px;background:#cacaca;"></div>
<div style="left:0px;top:766px;width:1024px;height:2px;background:#000;"></div>
<div style="left:0px;top:727px;width:1px;height:39px;background:#000;"></div>
<div style="left:1px;top:727px;width:20px;height:1px;background:#f0f0f0;"></div>
<div style="left:1px;top:727px;width:1px;height:39px;background:#f0f0f0;"></div>
<div style="left:20px;top:728px;width:1px;height:38px;background:#aaa;"></div>
<div style="left:21px;top:727px;width:2px;height:39px;background:#000;"></div>
<div style="left:23px;top:727px;width:978px;height:1px;background:#f0f0f0;"></div>
<div style="left:23px;top:727px;width:1px;height:39px;background:#f0f0f0;"></div>
<div style="left:999px;top:728px;width:2px;height:38px;background:#e8e8e8;"></div>
<div style="left:1001px;top:727px;width:2px;height:39px;background:#000;"></div>
<div style="left:1003px;top:727px;width:19px;height:1px;background:#f0f0f0;"></div>
<div style="left:1003px;top:727px;width:1px;height:39px;background:#f0f0f0;"></div>
<div style="left:1022px;top:727px;width:2px;height:39px;background:#000;"></div>
<div style="left:1px;top:765px;width:1022px;height:1px;background:#999;"></div>
<svg class="a" style="left:5px;top:741px" width="12" height="12"><circle cx="6" cy="6" r="5.2" fill="#000"/><path d="M2.200,6 L6,2.800 V4.800 H9.300 V7.200 H6 V9.200 Z" fill="#fff"/></svg>
<svg class="a" style="left:1007px;top:741px" width="12" height="12"><circle cx="6" cy="6" r="5.2" fill="#000"/><path d="M9.800,6 L6,2.800 V4.800 H2.700 V7.200 H6 V9.200 Z" fill="#fff"/></svg>
<svg class="a" style="left:24px;top:728px" width="300" height="38">
<defs>
<linearGradient id="og" x1="0" y1="0" x2="1" y2="0"><stop offset="0" stop-color="#b82832"/><stop offset=".18" stop-color="#f09aa0"/><stop offset=".32" stop-color="#c83640"/><stop offset=".62" stop-color="#a81e28"/><stop offset=".8" stop-color="#e06a72"/><stop offset="1" stop-color="#b02630"/></linearGradient>
<linearGradient id="cg" x1="0" y1="0" x2="1" y2="1"><stop offset="0" stop-color="#5860a0"/><stop offset="1" stop-color="#a0a8dc"/></linearGradient>
<radialGradient id="hg" cx=".45" cy=".35" r=".7"><stop offset="0" stop-color="#ff4a40"/><stop offset=".6" stop-color="#e81010"/><stop offset="1" stop-color="#a80000"/></radialGradient>
</defs>
<!-- red hat -->
<g transform="rotate(7 18.500 23.500)">
<ellipse cx="18.500" cy="24.300" rx="16.300" ry="6.600" fill="#300"/>
<ellipse cx="18.500" cy="23.300" rx="16.300" ry="6.300" fill="url(#hg)"/>
</g>
<path d="M9.500,20.500 Q10,11.500 14,10 Q17,8.800 20,10.300 Q23.500,8.500 26.500,10.800 Q29.500,14 30,23 Q20,27.500 9.500,20.500Z" fill="url(#hg)"/>
<path d="M14.500,12 Q17,10.500 20,12 Q23,10.500 26,12" stroke="#a00" stroke-width="1" fill="none"/>
<path d="M9.700,18.300 Q19,24.500 30,20.200 L30,23.200 Q19,27.800 9.500,21.200Z" fill="#1a1a1a"/>
<path d="M31.500,3 L34.800,8.700 H28.200Z" fill="#fff" stroke="#000" stroke-width="1.100"/>
<!-- opera -->
<ellipse cx="50.200" cy="24.900" rx="13.400" ry="5.800" fill="#8a8ac4" opacity=".75" transform="rotate(14 50.200 24.900)"/>
<path fill-rule="evenodd" fill="url(#og)" d="M59.700,2.800 A13.800,15.500 0 1 0 59.700,33.800 A13.800,15.500 0 1 0 59.700,2.800Z M60,6 A4.650,12.300 0 1 1 60,30.600 A4.650,12.300 0 1 1 60,6Z"/>
<path d="M59.700,2.800 A13.800,15.500 0 0 0 46,18.300" stroke="#f4b0b4" stroke-width="1" fill="none" opacity=".7"/>
<!-- mail -->
<path d="M74.600,22.500 L79.500,12.700 L92,14.500 L105.800,27.700 L86,32.400Z" fill="#e2ba7a" stroke="#6a5430" stroke-width=".9"/>
<path d="M74.600,22.500 L90,23.500 L105.800,27.700 M79.500,12.700 L90,23.500 L86,32.400" stroke="#f0d8a8" stroke-width="1" fill="none"/>
<path d="M86,32.400 L105.800,27.700 L90,23.500Z" fill="#d2a868"/>
<path d="M80.600,10 L95.400,5.300 L106.900,16.500 L91,20.300Z" fill="#f6f6f6" stroke="#8a8a8a" stroke-width=".9"/>
<path d="M84.500,10.700 L94.600,7.600 L102.500,15.300 L91.800,18Z" fill="#3c78d0"/>
<ellipse cx="94" cy="12.800" rx="3.600" ry="3" fill="#78d098"/>
<!-- terminal -->
<path d="M113.100,10.500 L140.500,3.900 L141,28 L114.200,33.800Z" fill="#e6e6e6" stroke="#222" stroke-width="1"/>
<path d="M113.100,10.500 L114.200,33.800 L117,31 L116.500,13Z" fill="#bdbdbd"/>
<path d="M117.800,14.300 L138.300,9.400 L138.300,24.700 L117.800,29.100Z" fill="#17296c"/>
<path d="M128,11.800 L138.300,9.400 L138.300,24.700 L132,26Z" fill="#223a88" opacity=".7"/>
<path d="M120.500,16.500 L123.800,18.600 L120.500,21 M124.500,21.200 H129" stroke="#fff" stroke-width="1.500" fill="none"/>
<!-- documents + pen -->
<path d="M150.300,6.700 L168.400,5 L176,20.300 L158,24Z" fill="#f2f2f2" stroke="#555" stroke-width=".9"/>
<path d="M147,13.800 L165.600,9.400 L179.300,24.200 L160.700,27.700Z" fill="#fcfcfc" stroke="#555" stroke-width=".9"/>
<path d="M153,15.500 l8,-2 M154.500,18 l11,-2.500 M157,20.500 l11,-2.500 M159,23 l9,-2" stroke="#b4b4b4" stroke-width="1"/>
<path d="M163,25.300 l9,-1.800" stroke="#88a8f0" stroke-width="1.200"/>
<path d="M147,21.400 Q148.500,19.800 151,20.800 L177.500,32.500 L177.700,34 L175.500,33.800 L148.500,24.600 Q146.500,23.300 147,21.400Z" fill="#8c94cc" stroke="#3a3a5a" stroke-width=".7"/>
<path d="M147,21.400 Q148.500,19.800 151,20.800 L153.500,21.900 L152,25.800 L148.500,24.600 Q146.500,23.300 147,21.400Z" fill="#dcae28"/>
<path d="M157.500,23.700 L159.800,24.700 L158.300,28 L156,27.200Z" fill="#a06a40"/>
<!-- chart -->
<rect x="187.500" y="5.300" width="22.500" height="17.700" fill="url(#cg)" stroke="#2a2a4a" stroke-width="1"/>
<rect x="191.900" y="11.600" width="4.700" height="8.200" fill="#f06c3c"/><rect x="197.400" y="8.300" width="4.300" height="11.500" fill="#5cc47c"/><rect x="202.800" y="16" width="3.900" height="5" fill="#3c90f0"/>
<path d="M184.200,24.200 L202.300,19.800 L211,28.500 L194.600,35.100Z" fill="#ececec" stroke="#333" stroke-width="1"/>
<path d="M189.700,25.300 L201.200,22.500 L206.100,27.700 L195.200,30.700Z" fill="#3a92f4"/>
<!-- pie + sheet -->
<path d="M219.100,12.100 L240.400,6.100 L251.900,18.700 L230.600,23.600Z" fill="#f8f8f8" stroke="#444" stroke-width=".9"/>
<path d="M223,13 L240,8.300 L243,11.500 L226,16Z" fill="#a4d8f4"/>
<path d="M226,16 l17,-4.500 M228.500,18.500 l17,-4.300 M231,21 l17,-4 M229,11.300 l8,9.500 M235,9.700 l8,9.500" stroke="#b8c4cc" stroke-width=".7"/>
<ellipse cx="232.200" cy="26.800" rx="10.900" ry="8" fill="#3a4a7a"/>
<ellipse cx="232.200" cy="25.300" rx="10.900" ry="8.200" fill="#3c92f2"/>
<path d="M232.200,25.300 L234.500,17.300 A10.900,8.200 0 0 1 241.500,21Z" fill="#f27040"/>
<path d="M232.200,25.300 L241.500,21 A10.900,8.200 0 0 1 243.100,25Z" fill="#54c474"/>
<path d="M232.200,25.300 L243.100,25 A10.900,8.200 0 0 1 224.500,31.100Z" fill="#8088c4"/>
<!-- pager -->
<rect x="253.500" y="1.500" width="44" height="35" fill="#e4e4e4" stroke="#8c8c8c" stroke-width="1"/>
<rect x="255" y="3" width="20" height="15" fill="#2c2c6c"/>
<rect x="255.750" y="3.250" width="18" height="12" fill="#4a52a8" stroke="#fff" stroke-width="1"/>
<rect x="276" y="3" width="20.500" height="15" fill="#a0a0a0"/>
<rect x="255" y="19" width="20" height="16.500" fill="#a0a0a0"/>
<rect x="276" y="19" width="20.500" height="16.500" fill="#a0a0a0"/>
<rect x="255.750" y="19.750" width="16" height="11.800" fill="#e8e8e8" stroke="#000" stroke-width="1.400"/>
</svg>
<div style="left:370px;top:728px;width:307px;height:38px;background:#dcdcdc;"></div>
<svg class="a" style="left:371px;top:735px" width="8" height="26"><path d="M1,5 l5,-4 M1,9 l5,-4 M1,13 l5,-4 M1,17 l5,-4 M1,21 l5,-4 M1,25 l5,-4" stroke="#888" stroke-width="1"/></svg>
<svg class="a" style="left:668px;top:735px" width="8" height="26"><path d="M1,5 l5,-4 M1,9 l5,-4 M1,13 l5,-4 M1,17 l5,-4 M1,21 l5,-4 M1,25 l5,-4" stroke="#888" stroke-width="1"/></svg>
<div style="left:380px;top:729px;width:95px;height:36px;background:#e6e6e6;box-sizing:border-box;border:1px solid #666;box-shadow:inset 1px 1px 0 #fff;"></div>
<div style="left:475px;top:729px;width:95px;height:36px;background:#c8c8c8;box-sizing:border-box;border:1px solid #555;box-shadow:inset 1px 1px 0 #aaa;"></div>
<div style="left:570px;top:729px;width:95px;height:36px;background:#e6e6e6;box-sizing:border-box;border:1px solid #666;box-shadow:inset 1px 1px 0 #fff;"></div>
<svg class="a" style="left:384px;top:740px" width="14" height="14"><rect x=".5" y=".5" width="13" height="11" fill="#bbb" stroke="#333"/><rect x="2" y="2" width="10" height="7" fill="#3a4a3a"/><rect x="1" y="12" width="12" height="1.500" fill="#555"/></svg>
<span class="t h" style="left:399px;top:740px;letter-spacing:-.2px;">rahulk@rahu</span>
<svg class="a" style="left:479px;top:740px" width="15" height="15"><path d="M1.500,.5 H10 L13.500,4 V14 H1.500Z" fill="#f8f8f8" stroke="#666"/><path d="M10,.5 V4 H13.500" fill="#ddd" stroke="#888" stroke-width=".8"/></svg>
<span class="t h" style="left:494px;top:740px;word-spacing:1px;">SQLMinus 0</span>
<svg class="a" style="left:572px;top:738px" width="18" height="18"><ellipse cx="7" cy="11" rx="6.500" ry="3.500" fill="#8888c0" opacity=".7"/><ellipse cx="10" cy="8.500" rx="6" ry="7.500" fill="#c8202c"/><ellipse cx="10" cy="8.500" rx="2.300" ry="5.500" fill="#e6e6e6"/></svg>
<span class="t h" style="left:590px;top:740px;">Opera 6.11</span>
<div style="left:943px;top:728px;width:10px;height:38px;background:#dcdcdc;"></div>
<svg class="a" style="left:945px;top:735px" width="8" height="26"><path d="M1,5 l5,-4 M1,9 l5,-4 M1,13 l5,-4 M1,17 l5,-4 M1,21 l5,-4 M1,25 l5,-4" stroke="#888" stroke-width="1"/></svg>
<div style="left:800px;top:734px;width:140px;height:25px;background:#ccc;box-sizing:border-box;border:2px solid #e4e4e4;"></div>
<span class="t h" style="left:805px;top:740px;">07:00 PM Mon Nov 10</span>
</div></body></html>
